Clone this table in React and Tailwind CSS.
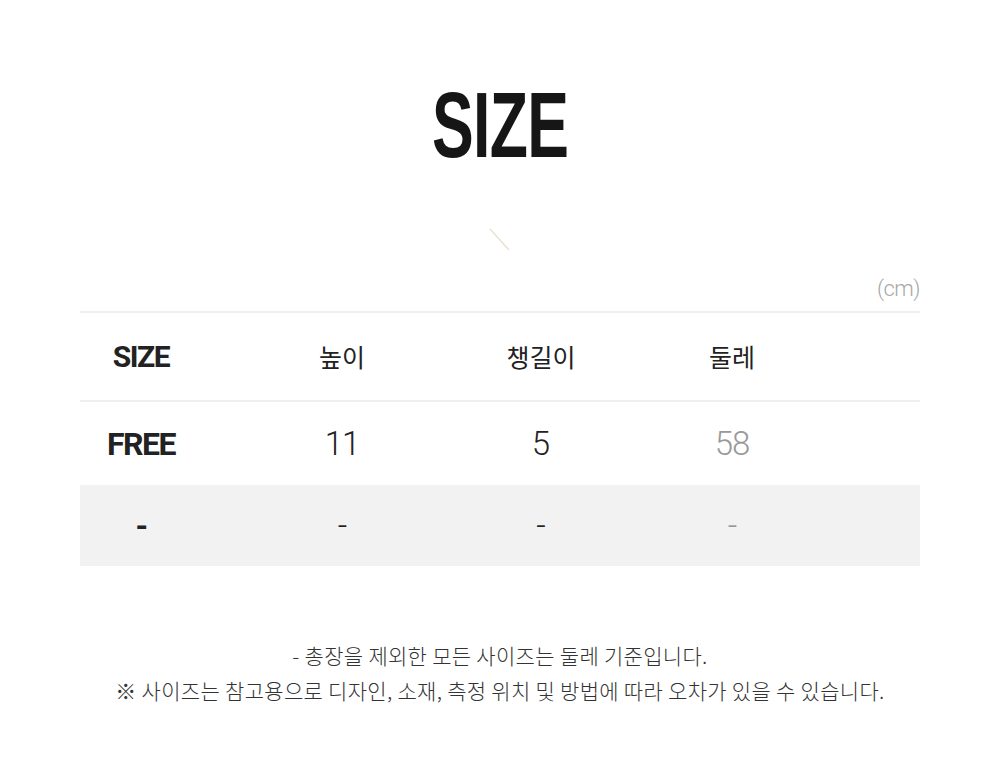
import React from 'react';

const rows = [
  { size: 'FREE', height: '11', brim: '5', round: '58' },
  { size: '-', height: '-', brim: '-', round: '-' },
];

const kr = { fontFamily: '"Noto Sans CJK KR", "Noto Sans", sans-serif' };
const num = { fontFamily: 'Roboto, "Noto Sans CJK KR", sans-serif' };

const App = () => {
  return (
    <div className="w-[1000px] h-[776px] bg-white flex flex-col items-center" style={kr}>
      <div className="h-[72px]" />
      <h1
        className="text-[92px] leading-[106px] font-bold text-[#161616] scale-x-[0.68] tracking-[-1px]"
        style={{ fontFamily: '"Liberation Sans", Arial, sans-serif' }}
      >
        SIZE
      </h1>
      <div className="h-[50px]" />
      <svg width="22" height="24" viewBox="0 0 22 24" className="block">
        <line x1="1" y1="1" x2="20" y2="22" stroke="#e9e2d2" strokeWidth="1.5" />
      </svg>
      <div className="w-[840px] flex justify-end mt-[24px]">
        <span className="text-[22px] leading-[26px] text-[#a8a8a8] font-light tracking-[-0.5px]" style={num}>
          (cm)
        </span>
      </div>
      <div className="w-[840px] mt-[9px] border-t-2 border-[#f0f0f0]">
        <div className="grid grid-cols-[122px_280px_118px_264px_1fr] h-[89px] items-center border-b-2 border-[#f0f0f0]">
          <div className="text-center text-[30px] font-bold text-[#222] tracking-[-1.5px]" style={num}>SIZE</div>
          <div className="text-center text-[25px] font-normal text-[#222]">높이</div>
          <div className="text-center text-[25px] font-normal text-[#222]">챙길이</div>
          <div className="text-center text-[25px] font-normal text-[#222]">둘레</div>
          <div />
        </div>
        {rows.map((row, index) => (
          <div
            key={index}
            className={`grid grid-cols-[122px_280px_118px_264px_1fr] items-center ${
              index === 0 ? 'h-[83px] bg-white' : 'h-[81px] bg-[#f2f2f2]'
            }`}
          >
            <div className="text-center text-[32px] font-bold text-[#222] tracking-[-1.5px]" style={num}>
              {row.size}
            </div>
            <div className="text-center text-[33px] font-light text-[#222] tracking-[-1px]" style={num}>{row.height}</div>
            <div className="text-center text-[33px] font-light text-[#222]" style={num}>{row.brim}</div>
            <div className="text-center text-[33px] font-light text-[#999] tracking-[-1px]" style={num}>{row.round}</div>
            <div />
          </div>
        ))}
      </div>
      <div className="mt-[72px] flex flex-col items-center text-[21px] leading-[35px] font-light text-[#333] tracking-[0.3px]">
        <p>- 총장을 제외한 모든 사이즈는 둘레 기준입니다.</p>
        <p>※ 사이즈는 참고용으로 디자인, 소재, 측정 위치 및 방법에 따라 오차가 있을 수 있습니다.</p>
      </div>
    </div>
  );
};

export default App;
